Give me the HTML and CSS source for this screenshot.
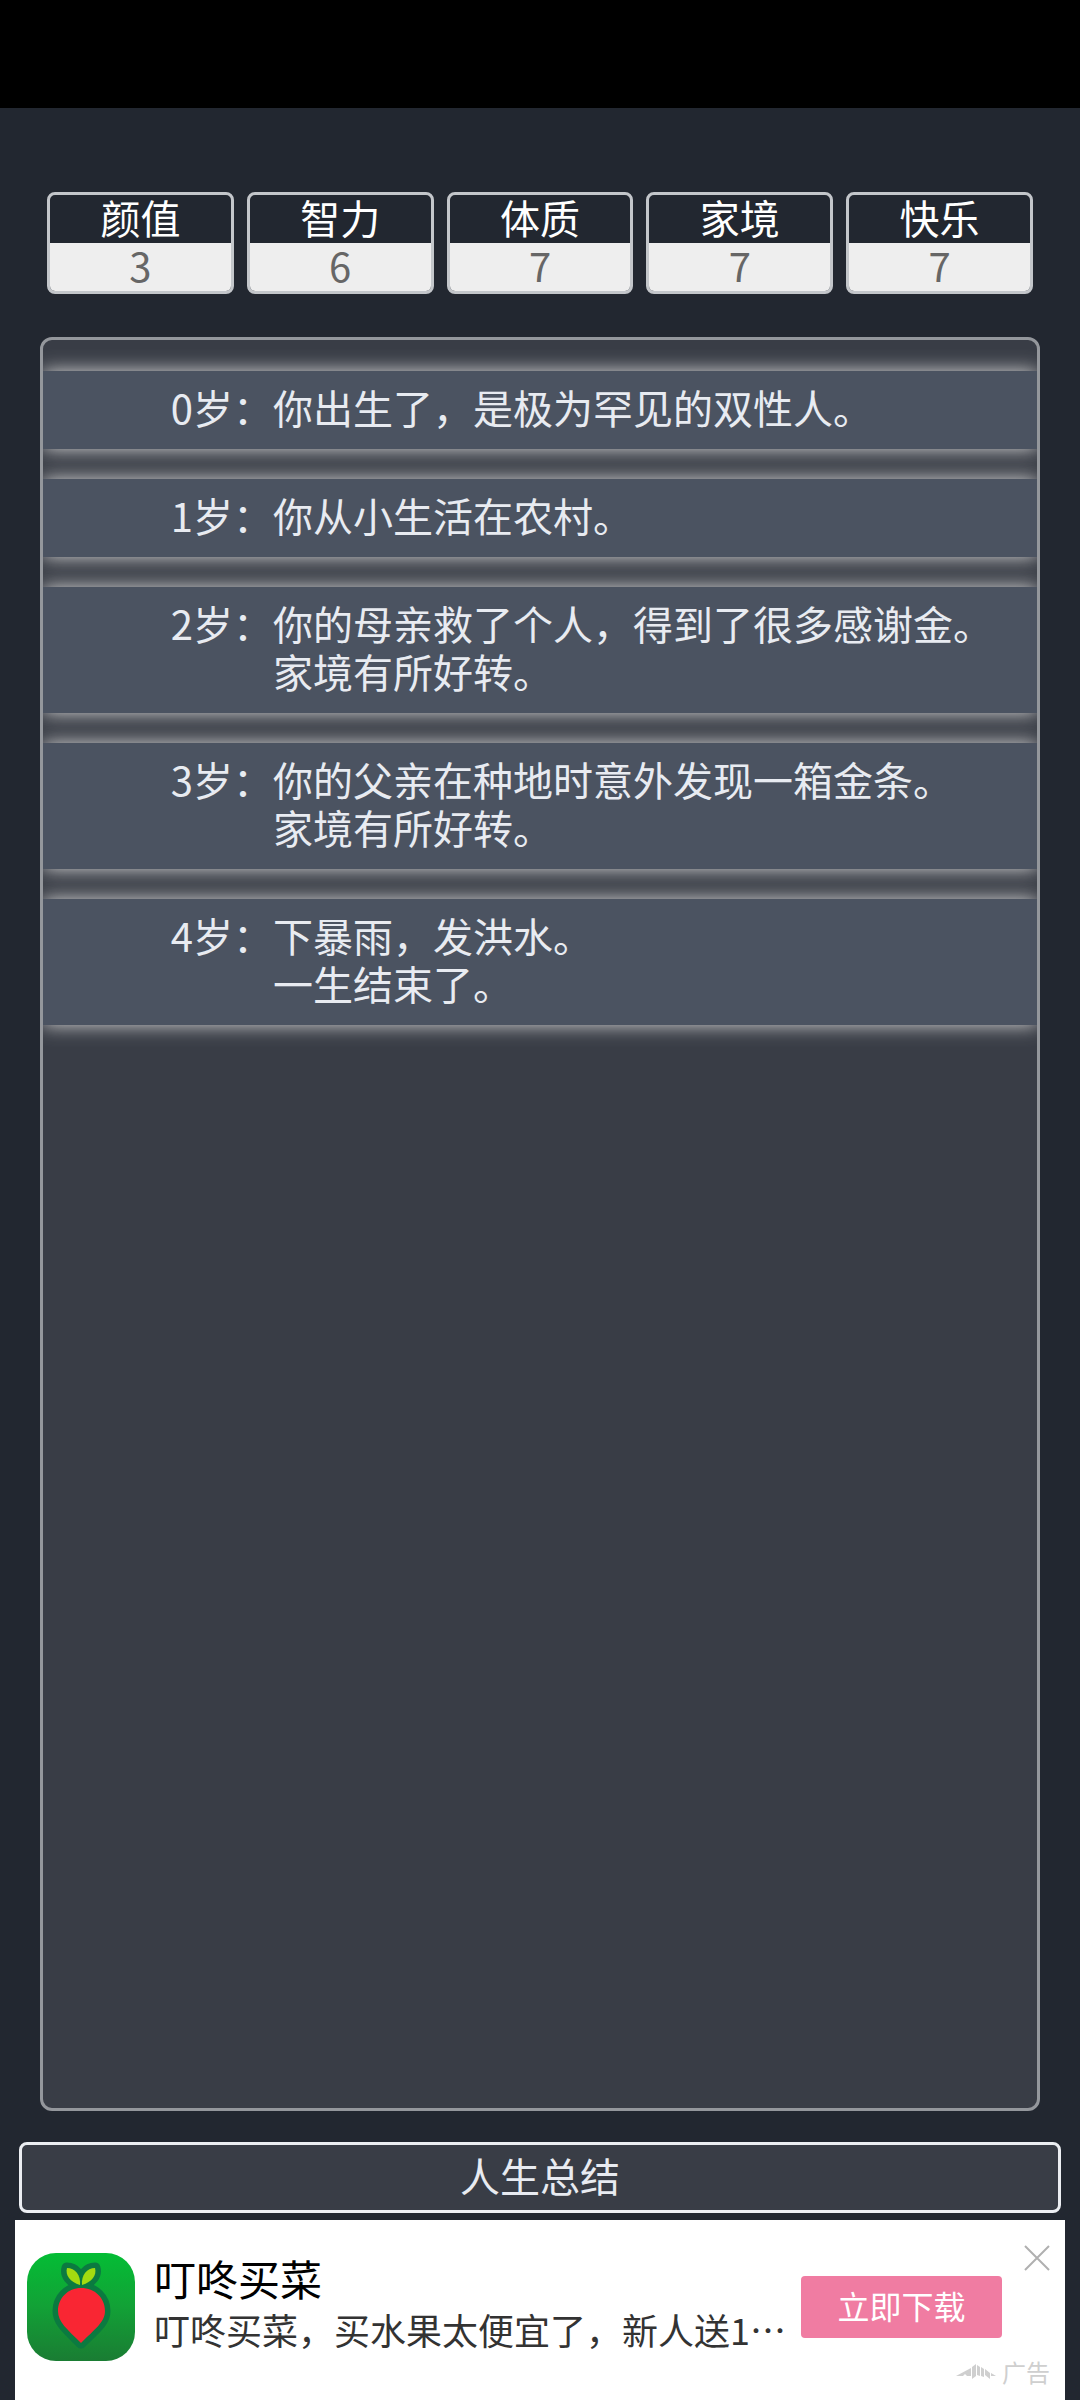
FILE: index.html
```html
<!DOCTYPE html>
<html lang="zh-CN">
<head>
    <meta charset="UTF-8">
    <meta name="viewport" content="width=device-width, initial-scale=1.0">
    <title>人生</title>
    <link rel="stylesheet" href="styles.css">
</head>
<body>
    <div class="status-bar"></div>
    <main class="game">
        <ul class="stats">
            <li class="stat"><span class="stat-name">颜值</span><span class="stat-value">3</span></li>
            <li class="stat"><span class="stat-name">智力</span><span class="stat-value">6</span></li>
            <li class="stat"><span class="stat-name">体质</span><span class="stat-value">7</span></li>
            <li class="stat"><span class="stat-name">家境</span><span class="stat-value">7</span></li>
            <li class="stat"><span class="stat-name">快乐</span><span class="stat-value">7</span></li>
        </ul>

        <ul class="life-log">
            <li class="entry">
                <span class="age">0岁：</span>
                <p>你出生了，是极为罕见的双性人。</p>
            </li>
            <li class="entry">
                <span class="age">1岁：</span>
                <p>你从小生活在农村。</p>
            </li>
            <li class="entry">
                <span class="age">2岁：</span>
                <p>你的母亲救了个人，得到了很多感谢金。<br>家境有所好转。</p>
            </li>
            <li class="entry">
                <span class="age">3岁：</span>
                <p>你的父亲在种地时意外发现一箱金条。<br>家境有所好转。</p>
            </li>
            <li class="entry">
                <span class="age">4岁：</span>
                <p>下暴雨，发洪水。<br>一生结束了。</p>
            </li>
        </ul>

        <button type="button" class="summary-button">人生总结</button>
    </main>

    <aside class="ad">
        <svg class="ad-icon" viewBox="0 0 108 108" aria-hidden="true">
            <defs>
                <linearGradient id="green" x1="0" y1="0" x2="0" y2="1">
                    <stop offset="0" stop-color="#04bd35"></stop>
                    <stop offset="0.5" stop-color="#12a136"></stop>
                    <stop offset="1" stop-color="#1a7c33"></stop>
                </linearGradient>
            </defs>
            <rect width="108" height="108" rx="29" fill="url(#green)"></rect>
            <g fill="#0b7a40" stroke="#0b7a40" stroke-width="11" stroke-linejoin="round">
                <path d="M53 32C43 29 38 22 40 15C48 15 54 22 53 32Z"></path>
                <path d="M55 32C65 29 70 22 68 15C60 15 54 22 55 32Z"></path>
                <path d="M54 35C68 35 78 45 78 58C78 69 68 76 54 90C40 76 31 69 31 58C31 45 41 35 54 35Z"></path>
            </g>
            <path fill="#a3db10" d="M53 32C43 29 38 22 40 15C48 15 54 22 53 32Z"></path>
            <path fill="#a3db10" d="M55 32C65 29 70 22 68 15C60 15 54 22 55 32Z"></path>
            <path fill="#f92633" d="M54 35C68 35 78 45 78 58C78 69 68 76 54 90C40 76 31 69 31 58C31 45 41 35 54 35Z"></path>
        </svg>
        <div class="ad-text">
            <h2>叮咚买菜</h2>
            <p>叮咚买菜，买水果太便宜了，新人送1…</p>
        </div>
        <button type="button" class="download-button">立即下载</button>
        <button type="button" class="close-button" aria-label="关闭">
            <svg width="26" height="26" viewBox="0 0 26 26" fill="none" stroke="#b0b0b0" stroke-width="2">
                <path d="M1 1L25 25M25 1L1 25"></path>
            </svg>
        </button>
        <div class="ad-mark">
            <svg width="40" height="16" viewBox="0 0 40 16" fill="#cfcfcf" aria-hidden="true">
                <path d="M0 12L15 4V12H11L9 10L7 12Z"></path>
                <path d="M16 3L20 0V12L16 15Z"></path>
                <path d="M21 1L24 3V12L21 11Z"></path>
                <path d="M25 3L28 5V13L25 12Z"></path>
                <path d="M29 5L34 9V15L29 11Z"></path>
                <path d="M35 9L40 12H35Z"></path>
            </svg>
            <span>广告</span>
        </div>
    </aside>
</body>
</html>
```

FILE: styles.css
```css
* {
    box-sizing: border-box;
}

body {
    margin: 0;
    min-height: 100vh;
    display: flex;
    flex-direction: column;
    background: #222730;
    font-family: "Noto Sans CJK SC", sans-serif;
    font-size: 40px;
    line-height: 48px;
    color: #e8ebf1;
}

ul, h2, p {
    margin: 0;
    padding: 0;
    list-style: none;
}

button {
    font-family: inherit;
    cursor: pointer;
}

.status-bar {
    height: 108px;
    background: #000;
}

.game {
    flex: 1;
    display: flex;
    flex-direction: column;
    padding: 84px 19px 7px;
}

.stats {
    display: flex;
    gap: 13px;
    padding: 0 28px;
}

.stat {
    flex: 1;
    display: flex;
    flex-direction: column;
    border: 3px solid #c3c6ca;
    border-radius: 8px;
    line-height: 44px;
    text-align: center;
}

.stat-name {
    padding-bottom: 4px;
    color: #fff;
}

.stat-value {
    padding-bottom: 4px;
    background: #eee;
    border-radius: 0 0 5px 5px;
    color: #666;
}

.life-log {
    flex: 1;
    display: flex;
    flex-direction: column;
    gap: 30px;
    margin: 43px 21px 31px;
    padding-top: 31px;
    background: #393d46;
    border: 3px solid #94979c;
    border-radius: 12px;
    overflow: hidden;
}

.entry {
    display: flex;
    padding: 12px 0 18px;
    background: #4b5361;
    box-shadow: 0 0 18px #d8d8d8;
}

.age {
    flex: 0 0 230px;
    text-align: right;
}

.summary-button {
    height: 71px;
    padding: 0 0 6px;
    background: #393d46;
    border: 3px solid #eceef2;
    border-radius: 8px;
    font-size: 40px;
    line-height: 48px;
    color: #e8ebf1;
}

.ad {
    position: relative;
    display: flex;
    align-items: center;
    min-height: 180px;
    margin: 0 15px;
    padding: 0 63px 6px 12px;
    background: #fff;
}

.ad-icon {
    flex: none;
    width: 108px;
    height: 108px;
}

.ad-text {
    flex: 1;
    min-width: 0;
    margin-left: 19px;
    padding-bottom: 11px;
    white-space: nowrap;
}

.ad-text h2 {
    font-size: 42px;
    font-weight: 400;
    line-height: 54px;
    color: #000;
}

.ad-text p {
    font-size: 36px;
    color: #333;
}

.download-button {
    flex: none;
    width: 201px;
    height: 62px;
    padding: 0 0 4px;
    background: #f07ca2;
    border: none;
    border-radius: 4px;
    font-size: 32px;
    color: #fff;
}

.close-button {
    position: absolute;
    top: 25px;
    right: 15px;
    display: flex;
    padding: 0;
    background: none;
    border: none;
}

.ad-mark {
    position: absolute;
    right: 15px;
    bottom: 12px;
    display: flex;
    align-items: center;
    gap: 6px;
    font-size: 24px;
    line-height: 32px;
    color: #cfcfcf;
}
```
